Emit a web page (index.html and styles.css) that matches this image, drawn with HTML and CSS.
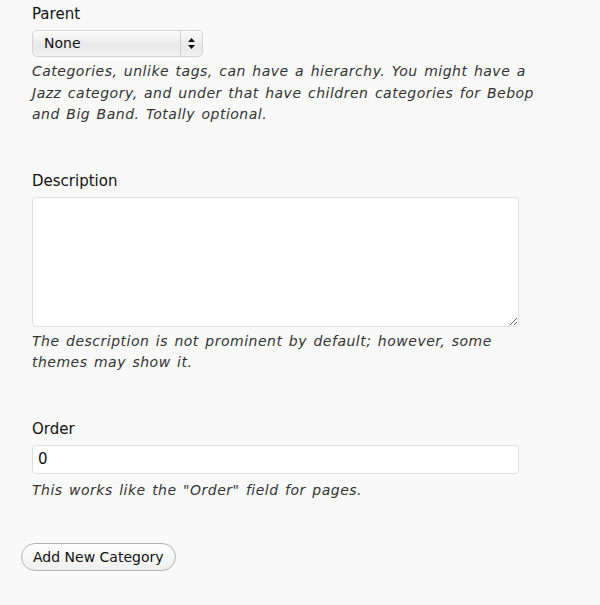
FILE: index.html
```html
<!DOCTYPE html>
<html lang="en">
<head>
<meta charset="UTF-8">
<title>Add New Category</title>
<link rel="stylesheet" href="styles.css">
</head>
<body>

<form class="category-form">
  <div class="form-field">
    <label class="field-label" for="parent">Parent</label>
    <div class="select-box" id="parent">
      <span class="select-value">None</span>
      <span class="select-arrows">
        <svg width="7" height="11" viewBox="0 0 7 11">
          <path d="M3.5 0 L7 4 L0 4 Z" fill="#111"/>
          <path d="M0 7 L7 7 L3.5 11 Z" fill="#111"/>
        </svg>
      </span>
    </div>
    <p class="field-help">Categories, unlike tags, can have a hierarchy. You might have a Jazz category, and under that have children categories for Bebop and Big Band. Totally optional.</p>
  </div>

  <div class="form-field">
    <label class="field-label" for="description">Description</label>
    <textarea class="text-area" id="description"></textarea>
    <p class="field-help">The description is not prominent by default; however, some themes may show it.</p>
  </div>

  <div class="form-field">
    <label class="field-label" for="order">Order</label>
    <input class="text-input" type="text" id="order" value="0">
    <p class="field-help">This works like the "Order" field for pages.</p>
  </div>

  <button type="button" class="button">Add New Category</button>
</form>

</body>
</html>
```

FILE: styles.css
```css
/* General Styling */
body {
  margin: 0;
  background-color: #f9f9f9;
  color: #111;
  font-family: "DejaVu Sans", Verdana, sans-serif;
}

.category-form {
  padding: 4px 0 0 21px;
  width: 530px;
}

.form-field {
  padding-left: 11px;
  margin-bottom: 45px;
}

.field-label {
  display: block;
  font-size: 15px;
  line-height: 20px;
  margin-bottom: 6px;
}

.field-help {
  margin: 4px 0 0;
  font-size: 14px;
  font-style: italic;
  line-height: 21.5px;
  letter-spacing: 0.5px;
  word-spacing: 1.5px;
  color: #333;
  width: 520px;
}

/* Fake select box */
.select-box {
  display: flex;
  width: 171px;
  height: 27px;
  box-sizing: border-box;
  border: 1px solid #d4d4d4;
  border-radius: 5px;
  background: linear-gradient(#fdfdfd, #e8e8e8 60%, #f2f2f2);
  box-shadow: inset 0 1px 0 #fff;
}

.select-value {
  flex: 1;
  padding-left: 11px;
  font-size: 14px;
  line-height: 25px;
}

.select-arrows {
  display: flex;
  align-items: center;
  justify-content: center;
  width: 21px;
  border-left: 1px solid #cfcfcf;
}

.text-area,
.text-input {
  display: block;
  width: 487px;
  box-sizing: border-box;
  border: 1px solid #dfdfdf;
  border-radius: 4px;
  background-color: #fff;
  font-family: inherit;
  margin: 0;
}

.text-area {
  height: 130px;
  resize: vertical;
}

.text-input {
  height: 29px;
  padding: 0 5px;
  font-size: 15px;
  color: #111;
}

.text-input + .field-help {
  margin-top: 6px;
}

.button {
  margin-top: -3px;
  height: 28px;
  padding: 0 11px;
  border: 1px solid #b3b3b3;
  border-radius: 14px;
  background: linear-gradient(#ffffff, #efefef);
  font-family: inherit;
  font-size: 14px;
  color: #111;
}
```
